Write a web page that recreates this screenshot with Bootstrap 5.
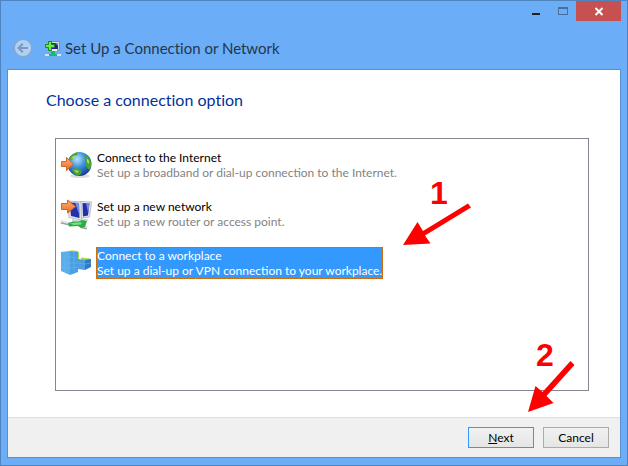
<!DOCTYPE html>
<html lang="en">
<head>
<meta charset="utf-8">
<meta name="viewport" content="width=device-width, initial-scale=1">
<title>Set Up a Connection or Network</title>
<link href="https://cdn.jsdelivr.net/npm/bootstrap@5.3.0/dist/css/bootstrap.min.css" rel="stylesheet">
<style>
  body { font-family: Lato, "Open Sans", sans-serif; font-variant-ligatures: none; font-size: 12px; line-height: 15px; color: #000; }
  button { font-family: inherit; }
  svg { display: block; flex: none; }
  .window { background: #6badf6; border: 1px solid #4f84bf; padding: 0 6px 7px; }
  .caption { height: 20px; }
  .caption button { border: 0; background: none; padding: 0; width: 26px; height: 20px; }
  .caption .close-window { width: 45px; background: #c75050; }
  .title-row { height: 48px; padding: 6px 0 0 6px; }
  .back { border: 0; padding: 0; background: none; margin-right: 11px; }
  .title-row h1 { font-size: 15px; line-height: 20px; color: #25364a; }
  .panel { border: 1px solid #5690d2; background: #fff; }
  .page { padding: 20px 31px 26px 38px; }
  .page h2 { font-size: 16px; line-height: 20px; color: #003399; margin-bottom: 28px; }
  .option-box { border: 1px solid #828790; margin-left: 9px; padding: 10px 4px; gap: 17px; }
  .option { border: 0; background: none; padding: 0; gap: 4px; color: #000; }
  .option-text { border: 1px solid transparent; }
  .option-text span { display: block; }
  .option-text .hint { color: #838383; }
  .option.selected .option-text { background: #3399ff; border: 1px dotted #cc6600; color: #fff; }
  .option.selected .hint { color: #fff; }
  .footer-bar { background: #f0f0f0; border-top: 1px solid #dfdfdf; padding: 9px 11px; gap: 9px; }
  .dialog-btn { width: 66px; height: 21px; padding: 0; font-size: 12px; line-height: 19px; color: #000; border: 1px solid #acacac; border-radius: 0; background: linear-gradient(#f1f1f1, #e5e5e5); }
  .dialog-btn.primary { border-color: #3399ff; }
  .callout { position: absolute; pointer-events: none; fill: #f00; font: bold 32px "Liberation Sans", sans-serif; }
  .callout-one { left: 344px; top: 29px; }
  .callout-two { right: 40px; bottom: 42px; }
</style>
</head>
<body>
<main class="window min-vh-100 d-flex flex-column">
  <div class="caption d-flex justify-content-end">
    <button type="button" aria-label="Minimize"><svg width="26" height="20"><path fill="#222" d="M8 12h8v2H8z"/></svg></button>
    <button type="button" aria-label="Maximize" disabled><svg width="26" height="20"><path fill="#4b6f9a" fill-rule="evenodd" d="M8 6h10v8H8zM9 8v5h8V8z"/></svg></button>
    <button type="button" class="close-window" aria-label="Close"><svg width="45" height="20"><path fill="none" stroke="#fff" stroke-width="2" d="M19.500 7l7 7M26.500 7l-7 7"/></svg></button>
  </div>
  <header class="title-row d-flex align-items-center">
    <button type="button" class="back" aria-label="Back" disabled><svg width="20" height="20" viewBox="0 0 20 20"><circle cx="10" cy="10" r="8.700" fill="#acd0f7" stroke="#8ba6c6" stroke-width="1.300"/><path fill="none" stroke="#8199b6" stroke-width="2" d="M15 10H6M9.800 5.800L5.600 10l4.200 4.200"/></svg></button>
    <svg width="17" height="17" viewBox="0 0 17 17"><path fill="#d8dde2" stroke="#7b8ba0" d="M5.500 1.500h10v8.500h-10z"/><path fill="#20209b" d="M7 3h7v6H7z"/><path fill="#6b82d8" d="M11 3h3v3z"/><path fill="#eef2f5" d="M5 9h8v2H5z"/><path fill="#16b878" d="M7 11h4v3h2v2H5v-2h2z"/><path fill="#e3e3df" d="M1 14h4v2H1zM13 14h4v2h-4z"/><path fill="#70e74c" stroke="#168c16" d="M4.500 1.500h3v3h3v3h-3v3h-3v-3h-3v-3h3z"/></svg>
    <h1 class="m-0 ps-1 fw-normal">Set Up a Connection or Network</h1>
  </header>
  <section class="panel flex-grow-1 d-flex flex-column">
    <div class="page flex-grow-1 d-flex flex-column">
      <h2 class="mt-0 fw-normal">Choose a connection option</h2>
      <div class="option-box position-relative flex-grow-1 d-flex flex-column align-items-start" role="listbox" aria-label="Connection options">
        <button type="button" role="option" aria-selected="false" class="option d-flex align-items-center text-start">
          <svg width="32" height="32" viewBox="0 0 32 32">
            <defs><radialGradient id="sea" cx=".4" cy=".3" r=".75"><stop offset="0" stop-color="#b5e4ff"/><stop offset=".45" stop-color="#3e92dd"/><stop offset="1" stop-color="#12338e"/></radialGradient><linearGradient id="arrow" x2="0" y2="1"><stop offset="0" stop-color="#ffb078"/><stop offset="1" stop-color="#ee6820"/></linearGradient></defs>
            <ellipse cx="20" cy="27" rx="10" ry="2" fill="#ddd"/>
            <circle cx="19.500" cy="15" r="12" fill="url(#sea)"/>
            <path fill="#4da332" d="M9 9c2-3 5-5 9-6l-1 3-3 1-1 3-3 1zM25 5c3 2 5 5 6 8v5l-2 3-3-4-1-5 2-2-3-2zM12 20l5-1 5 3-1 3-3 2c-3-1-5-3-6-7z"/>
            <path fill="#b5dc63" d="M12 8l3-2-1 3-3 1zM27 9l2 3v3l-2-2zM14 21l5 1-2 2z"/>
            <path fill="url(#arrow)" stroke="#d2662a" d="M1.500 12.500h5v-4l7 6.500-7 6.500v-4h-5z"/>
          </svg>
          <span class="option-text"><span>Connect to the Internet</span><span class="hint">Set up a broadband or dial-up connection to the Internet.</span></span>
        </button>
        <button type="button" role="option" aria-selected="false" class="option d-flex align-items-center text-start">
          <svg width="32" height="32" viewBox="0 0 32 32">
            <path fill="#e4e7e9" stroke="#b8bcc2" d="M20 3.500l11.500.500-2 15-8 1z"/>
            <path fill="#e4e7e9" stroke="#b8bcc2" d="M8 3l13 1 .500 18-12.500-2.500z"/>
            <path fill="#2030aa" d="M22.500 5l7 .500-1.500 12-5 1zM9.500 4.500l9.500.500 .500 15-8.500-2z"/><path fill="#7788df" d="M26 5.200l3.500.300-1.200 10zM15 4.800l4 .200.400 12z"/>
            <path fill="#d3d5d9" d="M12 21l8 1 3-1.500 6 1-2 2-6 1-9-1z"/>
            <path fill="none" stroke="#999fa5" stroke-width="3" d="M1 24l8 2M21 28.500l6 1.500"/>
            <path fill="none" stroke="#e5e7e8" stroke-width="2" d="M1 23l8 2M21 27.500l6 1.500"/>
            <path fill="#2aac49" d="M8 25l5-1.500 6 0 3-1.500 5 1-2 6-4 1-3-2-9 .500z"/><path fill="#7bdf82" d="M10 25.500l6-1 6 0-1 2-7 .500z"/>
            <path fill="url(#arrow)" stroke="#d2662a" d="M1.500 5.500h6v-3.500l8 6.500-8 6.500v-3.500h-6z"/>
          </svg>
          <span class="option-text"><span>Set up a new network</span><span class="hint">Set up a new router or access point.</span></span>
        </button>
        <button type="button" role="option" aria-selected="true" class="option selected d-flex align-items-center text-start">
          <svg width="32" height="32" viewBox="0 0 32 32">
            <path fill="#a5d84a" d="M9 3l9 1 1 2v7h-2V6zM21 10.500l9 1v2h-9z"/>
            <path fill="#5aaeea" d="M1 5l9-1v24l-9-4z"/><path fill="#4a9fe2" d="M10 4l8 1v20l-8 3z"/>
            <path fill="#4d9fdf" d="M18 12l7 1v10l-7-1z"/><path fill="#2f7bc4" d="M25 13l6-1v8l-6 3z"/>
            <path fill="none" stroke="#68b5ee" stroke-width=".6" d="M1 11l9-1 8 1M1 16h17M1 20l9 1 8-1M5 6v19M14 6v19M18 16l7 1 6-1"/>
          </svg>
          <span class="option-text"><span>Connect to a workplace</span><span class="hint">Set up a dial-up or VPN connection to your workplace.</span></span>
        </button>
        <svg class="callout callout-one" width="80" height="80"><text x="30" y="36">1</text><path d="M3 77l14.500-23 5.500 9 45-27.500 3 4-46 28 5.500 8z"/></svg>
      </div>
    </div>
    <footer class="footer-bar position-relative d-flex justify-content-end">
      <button type="button" class="btn dialog-btn primary"><u>N</u>ext</button>
      <button type="button" class="btn dialog-btn">Cancel</button>
      <svg class="callout callout-two" width="56" height="84"><text x="12" y="35">2</text><path d="M4 81l7.500-26 7 6 28-31 4 4-28 31 7 7z"/></svg>
    </footer>
  </section>
</main>
<script src="https://cdn.jsdelivr.net/npm/bootstrap@5.3.0/dist/js/bootstrap.bundle.min.js"></script>
</body>
</html>
